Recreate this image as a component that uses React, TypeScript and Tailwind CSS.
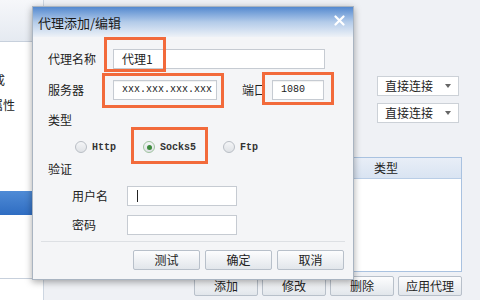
import React from "react";

const cjk = { fontFamily: '"Noto Sans CJK SC", "Noto Sans", sans-serif' };
const mono = { fontFamily: '"Liberation Mono", "DejaVu Sans Mono", monospace' };

const Field = ({ w, children }: { w: string; children?: React.ReactNode }) => (
  <div
    className={`${w} h-[20px] bg-white border border-[#c6cbd2] shadow-[inset_0_1px_1px_rgba(0,0,0,0.06)] flex items-center pl-[8px] text-[10px] text-[#222]`}
    style={mono}
  >
    {children}
  </div>
);

const Radio = ({ checked, label }: { checked?: boolean; label: string }) => (
  <div className="flex items-center gap-[5px]">
    <span
      className={`w-[12px] h-[12px] rounded-full border flex items-center justify-center bg-gradient-to-b from-[#f4f5f7] to-[#dfe2e6] ${
        checked ? "border-[#9fc39f]" : "border-[#b9bec5]"
      }`}
    >
      {checked && <span className="w-[5px] h-[5px] rounded-full bg-[#3d8a3d]" />}
    </span>
    <span className="text-[10px] font-bold text-[#333]" style={mono}>
      {label}
    </span>
  </div>
);

const DlgButton = ({ label }: { label: string }) => (
  <button className="w-[67px] h-[20px] rounded-[2px] border border-[#b8c0ca] bg-gradient-to-b from-[#fdfdfe] to-[#e2e6eb] text-[12px] text-[#222] leading-none">
    {label}
  </button>
);

const BarButton = ({ label }: { label: string }) => (
  <button className="w-[64px] h-[20px] rounded-[2px] border border-[#b8c0ca] bg-gradient-to-b from-[#fdfdfe] to-[#e2e6eb] text-[12px] text-[#222] leading-none">
    {label}
  </button>
);

const Select = () => (
  <div className="w-[82px] h-[20px] bg-white border border-[#ccd1d7] flex items-center justify-between pl-[7px] pr-[7px] text-[12px] text-[#222]">
    <span>直接连接</span>
    <span className="w-0 h-0 border-l-[3px] border-r-[3px] border-t-[4px] border-l-transparent border-r-transparent border-t-[#666]" />
  </div>
);

export default function App() {
  return (
    <div
      className="relative w-[480px] h-[300px] overflow-hidden bg-[#eff1f5] flex"
      style={cjk}
    >
      {/* left tree panel */}
      <div className="w-[44px] shrink-0 border-r border-[#cdd6e1] flex flex-col bg-white overflow-hidden">
        <div className="h-[42px] border-b border-[#c7d0dc] bg-gradient-to-b from-[#f6f7fa] to-[#e5eaf1]" />
        <div className="flex-1 flex flex-col text-[12px] text-[#222]">
          <div className="mt-[29px] ml-[-19px] h-[18px] leading-[18px] whitespace-nowrap">完成</div>
          <div className="mt-[7px] ml-[-9px] h-[18px] leading-[18px] whitespace-nowrap">属性</div>
          <div className="mt-[77px] h-[24px] bg-gradient-to-b from-[#4f8bd6] to-[#2f6dc2]" />
        </div>
        <div className="h-[22px] border-t border-[#c7d0dc] bg-white" />
      </div>

      {/* right content */}
      <div className="flex-1 flex flex-col pr-[18px] pt-[76px]">
        <div className="self-end mr-[3px] flex flex-col gap-[7px]">
          <Select />
          <Select />
        </div>
        <div className="mt-[34px] ml-auto w-[300px] h-[115px] border border-[#a9c2e0] bg-white flex flex-col">
          <div className="h-[21px] flex border-b border-[#b9cde6] bg-gradient-to-b from-[#e8eef7] to-[#d9e4f2] text-[12px] text-[#222]">
            <div className="flex-1 border-r border-[#b9cde6]" />
            <div className="w-[150px] flex items-center justify-center">类型</div>
          </div>
        </div>
        <div className="mt-[4px] self-end flex gap-[4px]">
          <BarButton label="添加" />
          <BarButton label="修改" />
          <BarButton label="删除" />
          <BarButton label="应用代理" />
        </div>
      </div>

      {/* dialog */}
      <div className="absolute left-[32px] top-[6px] w-[322px] h-[274px] border border-[#a9b4c1] bg-[#f4f5f7] shadow-[0_2px_7px_rgba(0,0,0,0.35)] flex flex-col">
        <div className="h-[30px] shrink-0 flex items-center justify-between pl-[5px] pr-[8px] bg-gradient-to-b from-[#5489cf] via-[#b3cbe9] to-[#eef2f7]">
          <span className="text-[13px] text-[#1a1a1a] mt-[2px]">代理添加/编辑</span>
          <svg width="11" height="11" viewBox="0 0 11 11" className="mb-[3px]">
            <path d="M1.5 1.5 L9.5 9.5 M9.5 1.5 L1.5 9.5" stroke="#fff" strokeWidth="2.2" strokeLinecap="round" />
          </svg>
        </div>

        <div className="flex flex-col pl-[15px] text-[12px] text-[#222]">
          <div className="mt-[12px] flex items-center h-[20px]">
            <span className="w-[65px]">代理名称</span>
            <div className="w-[212px] h-[20px] bg-white border border-[#c6cbd2] flex items-center pl-[8px] text-[12px]">
              代理1
            </div>
          </div>
          <div className="mt-[10px] flex items-center h-[21px]">
            <span className="w-[65px]">服务器</span>
            <Field w="w-[104px]">xxx.xxx.xxx.xxx</Field>
            <span className="ml-[25px] w-[30px]">端口</span>
            <Field w="w-[52px]">1080</Field>
          </div>
          <div className="mt-[12px] h-[16px] leading-[16px]">类型</div>
          <div className="mt-[11px] h-[16px] pl-[27px] flex items-center gap-[27px]">
            <Radio label="Http" />
            <Radio label="Socks5" checked />
            <Radio label="Ftp" />
          </div>
          <div className="mt-[6px] h-[16px] leading-[16px]">验证</div>
          <div className="mt-[9px] flex items-center h-[20px] pl-[24px]">
            <span className="w-[55px]">用户名</span>
            <div className="w-[110px] h-[20px] bg-white border border-[#c6cbd2] flex items-center pl-[9px]">
              <span className="w-px h-[12px] bg-[#222]" />
            </div>
          </div>
          <div className="mt-[9px] flex items-center h-[20px] pl-[24px]">
            <span className="w-[55px]">密码</span>
            <div className="w-[110px] h-[20px] bg-white border border-[#c6cbd2]" />
          </div>
        </div>
        <div className="mt-[6px] mx-[8px] border-t border-[#dde0e4]" />
        <div className="mt-[8px] flex justify-end gap-[5px] pr-[9px]">
          <DlgButton label="测试" />
          <DlgButton label="确定" />
          <DlgButton label="取消" />
        </div>

        {/* annotation boxes */}
        <div className="absolute left-[71px] top-[30px] w-[62px] h-[35px] border-[3px] border-[#f26a3b]" />
        <div className="absolute left-[69px] top-[66px] w-[122px] h-[35px] border-[3px] border-[#f26a3b]" />
        <div className="absolute left-[229px] top-[65px] w-[72px] h-[33px] border-[3px] border-[#f26a3b]" />
        <div className="absolute left-[98px] top-[120px] w-[77px] h-[37px] border-[3px] border-[#f26a3b]" />
      </div>
    </div>
  );
}
